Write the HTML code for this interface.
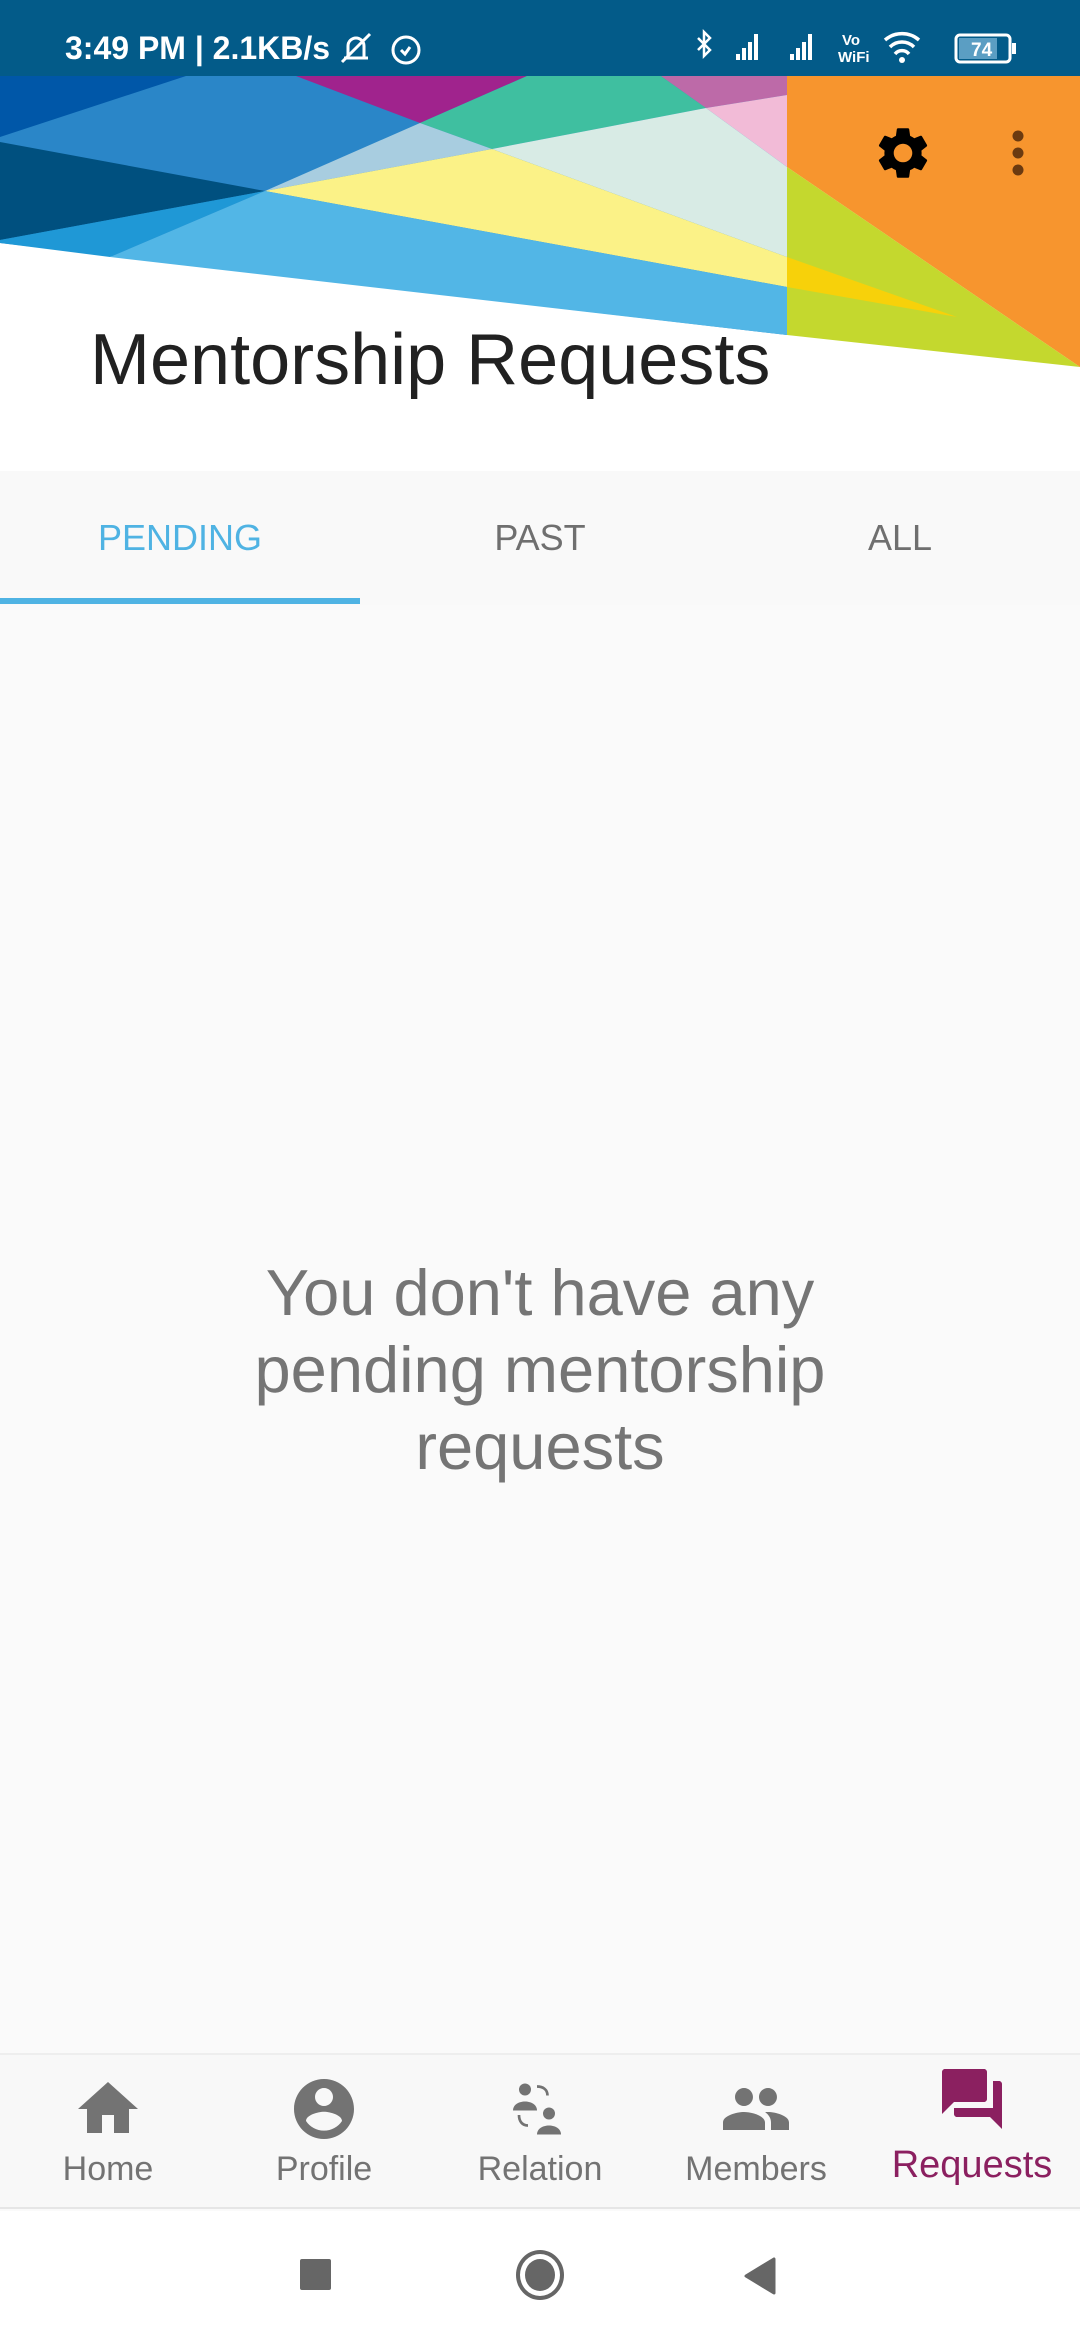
<!DOCTYPE html>
<html><head><meta charset="utf-8"><style>
*{margin:0;padding:0;box-sizing:border-box}
body{width:1080px;height:2340px;overflow:hidden;background:#fafafa;font-family:"Liberation Sans",sans-serif;position:relative}
.abs{position:absolute}
#sb{left:0;top:0;width:1080px;height:76px;background:#035b89;color:#fff}
#hdr{left:0;top:76px;width:1080px;height:395px;background:#fff}
#title{left:90px;top:319px;font-size:72px;color:#212121;white-space:nowrap}
#tabs{left:0;top:471px;width:1080px;height:134px;background:#f9f9f9}
.tab{position:absolute;top:46px;width:360px;text-align:center;font-size:36px;color:#6f6f6f;font-weight:500}
#ul{left:0;top:598px;width:360px;height:6px;background:#4fb3e3}
#msg{left:0;top:1254px;width:1080px;text-align:center;font-size:65px;line-height:77px;color:#757575}
#bn{left:0;top:2053px;width:1080px;height:156px;background:#f8f8f8;border-top:2px solid #eeeeee;border-bottom:2px solid #e6e6e6}
.it{position:absolute;top:0;width:216px;height:156px;text-align:center}
.it svg{position:absolute;left:72px;top:18px}
.it span{position:absolute;left:0;width:216px;top:95px;font-size:34px;color:#737373}
#sys{left:0;top:2211px;width:1080px;height:129px;background:#fff}
</style></head><body>
<div id="sb" class="abs">
 <div class="abs" style="left:65px;top:30px;font-size:32px;font-weight:bold;white-space:nowrap">3:49 PM | 2.1KB/s</div>
 <svg class="abs" style="left:338px;top:30px" width="90" height="36" viewBox="0 0 90 36" fill="none" stroke="#fff" stroke-width="3">
  <path d="M6 28h24M10 28V16a8 8 0 0 1 16 0v12M4 32L32 4"/><circle cx="68" cy="20" r="13"/><path d="M63 20l4 4 5-7"/>
 </svg>
 <svg class="abs" style="left:690px;top:26px" width="340" height="42" viewBox="0 0 340 42" fill="#fff">
  <path d="M8 12l12 12-6 6V6l6 6-12 12" fill="none" stroke="#fff" stroke-width="2.5"/>
  <rect x="46" y="28" width="4" height="6"/><rect x="52" y="22" width="4" height="12"/><rect x="58" y="16" width="4" height="18"/><rect x="64" y="8" width="4" height="26"/>
  <rect x="100" y="28" width="4" height="6"/><rect x="106" y="22" width="4" height="12"/><rect x="112" y="16" width="4" height="18"/><rect x="118" y="8" width="4" height="26"/>
  <text x="152" y="19" font-size="15" font-weight="bold" font-family="Liberation Sans">Vo</text><text x="148" y="36" font-size="15" font-weight="bold" font-family="Liberation Sans">WiFi</text>
  <path d="M195 14a26 26 0 0 1 34 0M200 21a17 17 0 0 1 24 0M205 28a9 9 0 0 1 14 0" fill="none" stroke="#fff" stroke-width="3.5"/><circle cx="212" cy="34" r="3"/>
  <rect x="266" y="9" width="54" height="27" rx="4" fill="none" stroke="#fff" stroke-width="3"/><rect x="269" y="12" width="38" height="21" fill="#5b9ec3"/><rect x="322" y="17" width="4" height="11"/>
  <text x="281" y="30" font-size="19" font-weight="bold" font-family="Liberation Sans">74</text>
 </svg>
</div>
<div id="hdr" class="abs"></div>
<svg class="abs" style="left:0;top:0" width="1080" height="380" viewBox="0 0 1080 380">
 <polygon points="0,76 787,76 787,335 0,243" fill="#2a86c8"/>
 <polygon points="0,76 186,76 0,137" fill="#0057a8"/>
 <polygon points="296,76 527,76 420,123" fill="#a0238d"/>
 <polygon points="527,76 661,76 706,108 492,149 420,123" fill="#3fbfa0"/>
 <polygon points="661,76 787,76 787,95 706,108" fill="#bd6aa8"/>
 <polygon points="787,76 885,76 787,95" fill="#ee4136"/>
 <polygon points="706,108 787,95 787,167" fill="#f2bbd7"/>
 <polygon points="492,149 706,108 787,167 787,257" fill="#d8ebe5"/>
 <polygon points="420,123 492,149 265,191" fill="#a8cde0"/>
 <polygon points="265,191 492,149 787,257 787,287" fill="#fbf287"/>
 <polygon points="0,142 265,191 0,240" fill="#00507f"/>
 <polygon points="0,240 265,191 110,257 0,243" fill="#1f98d6"/>
 <polygon points="265,191 787,287 787,335 110,257" fill="#52b6e6"/>
 <polygon points="787,76 1080,76 1080,367 787,167" fill="#f7952e"/>
 <polygon points="787,167 1080,367 787,335" fill="#c4d82e"/>
 <polygon points="787,257 957,317 787,287" fill="#f7d10a"/>
 <svg x="872" y="122" width="62" height="62" viewBox="0 0 24 24"><path fill="#000" d="M19.14 12.94c.04-.3.06-.61.06-.94 0-.32-.02-.64-.07-.94l2.03-1.58c.18-.14.23-.41.12-.61l-1.920-3.32c-.12-.22-.37-.29-.59-.22l-2.39.96c-.5-.38-1.03-.7-1.62-.94l-.36-2.54c-.04-.24-.24-.41-.48-.41h-3.84c-.24 0-.43.17-.47.41l-.36 2.54c-.59.24-1.13.57-1.62.94l-2.39-.96c-.22-.08-.47 0-.59.22L2.74 8.87c-.12.21-.08.47.12.61l2.03 1.58c-.05.3-.09.63-.09.94s.02.64.07.94l-2.03 1.58c-.18.14-.23.41-.12.61l1.92 3.32c.12.22.37.29.59.22l2.39-.96c.5.38 1.03.7 1.62.94l.36 2.54c.05.24.24.41.48.41h3.840c.24 0 .44-.17.47-.41l.36-2.54c.59-.24 1.13-.56 1.62-.94l2.39.96c.22.08.47 0 .59-.22l1.92-3.32c.12-.22.07-.47-.12-.61l-2.01-1.58zM12 15.6c-1.98 0-3.6-1.62-3.6-3.6s1.62-3.6 3.6-3.6 3.6 1.62 3.6 3.6-1.62 3.6-3.6 3.6z"/></svg>
 <circle cx="1018" cy="136" r="5.5" fill="#6b3a10"/><circle cx="1018" cy="153" r="5.5" fill="#6b3a10"/><circle cx="1018" cy="170" r="5.5" fill="#6b3a10"/>
</svg>
<div id="title" class="abs">Mentorship Requests</div>
<div id="tabs" class="abs">
 <div class="tab" style="left:0;color:#4fb3e3">PENDING</div>
 <div class="tab" style="left:360px">PAST</div>
 <div class="tab" style="left:720px">ALL</div>
</div>
<div id="ul" class="abs"></div>
<div id="msg" class="abs">You don't have any<br>pending mentorship<br>requests</div>
<div id="bn" class="abs">
 <div class="it" style="left:0"><svg width="72" height="72" viewBox="0 0 24 24"><path fill="#737373" d="M10 20v-6h4v6h5v-8h3L12 3 2 12h3v8z"/></svg><span>Home</span></div>
 <div class="it" style="left:216px"><svg width="72" height="72" viewBox="0 0 24 24"><path fill="#737373" d="M12 2C6.48 2 2 6.48 2 12s4.48 10 10 10 10-4.48 10-10S17.52 2 12 2zm0 3c1.66 0 3 1.34 3 3s-1.34 3-3 3-3-1.34-3-3 1.34-3 3-3zm0 14.2c-2.5 0-4.71-1.28-6-3.22.03-1.99 4-3.08 6-3.08 1.99 0 5.970 1.09 6 3.08-1.29 1.94-3.5 3.22-6 3.22z"/></svg><span>Profile</span></div>
 <div class="it" style="left:432px"><svg width="72" height="72" viewBox="0 0 24 24"><g fill="#737373"><circle cx="7" cy="5.5" r="2"/><path d="M3 12.5c0-2 2-3 4-3s4 1 4 3z"/><circle cx="15" cy="13.5" r="2"/><path d="M11 20.5c0-2 2-3 4-3s4 1 4 3z"/></g><path d="M11 4.5c2 0 3.5 1 3.5 3M5 14c0 2 1 3.5 3 3.5" fill="none" stroke="#737373" stroke-width="0.9"/></svg><span>Relation</span></div>
 <div class="it" style="left:648px"><svg width="72" height="72" viewBox="0 0 24 24"><path fill="#737373" d="M16 11c1.66 0 2.99-1.34 2.99-3S17.66 5 16 5c-1.66 0-3 1.34-3 3s1.34 3 3 3zm-8 0c1.66 0 2.99-1.34 2.99-3S9.66 5 8 5C6.34 5 5 6.34 5 8s1.34 3 3 3zm0 2c-2.33 0-7 1.170-7 3.5V19h14v-2.5c0-2.33-4.67-3.5-7-3.5zm8 0c-.29 0-.62.02-.97.05 1.16.84 1.970 1.97 1.97 3.45V19h6v-2.5c0-2.33-4.67-3.5-7-3.5z"/></svg><span>Members</span></div>
 <div class="it" style="left:864px"><svg width="72" height="72" viewBox="0 0 24 24" style="top:8px"><path fill="#8b2060" d="M21 6h-2v9H6v2c0 .55.45 1 1 1h11l4 4V7c0-.55-.45-1-1-1zm-4 6V3c0-.55-.45-1-1-1H3c-.55 0-1 .45-1 1v14l4-4h10c.55 0 1-.45 1-1z"/></svg><span style="font-size:38px;color:#8b2060;top:89px">Requests</span></div>
</div>
<div id="sys" class="abs">
 <div class="abs" style="left:300px;top:48px;width:31px;height:31px;background:#666;border-radius:2px"></div>
 <div class="abs" style="left:516px;top:39px;width:48px;height:50px;border:4px solid #666;border-radius:50%"><div style="position:absolute;left:5px;top:5px;width:30px;height:32px;background:#666;border-radius:50%"></div></div>
 <svg class="abs" style="left:744px;top:46px" width="32" height="38" viewBox="0 0 32 38"><path d="M30 2V36L2 19z" fill="#666" stroke="#666" stroke-width="3" stroke-linejoin="round"/></svg>
</div>
</body></html>
